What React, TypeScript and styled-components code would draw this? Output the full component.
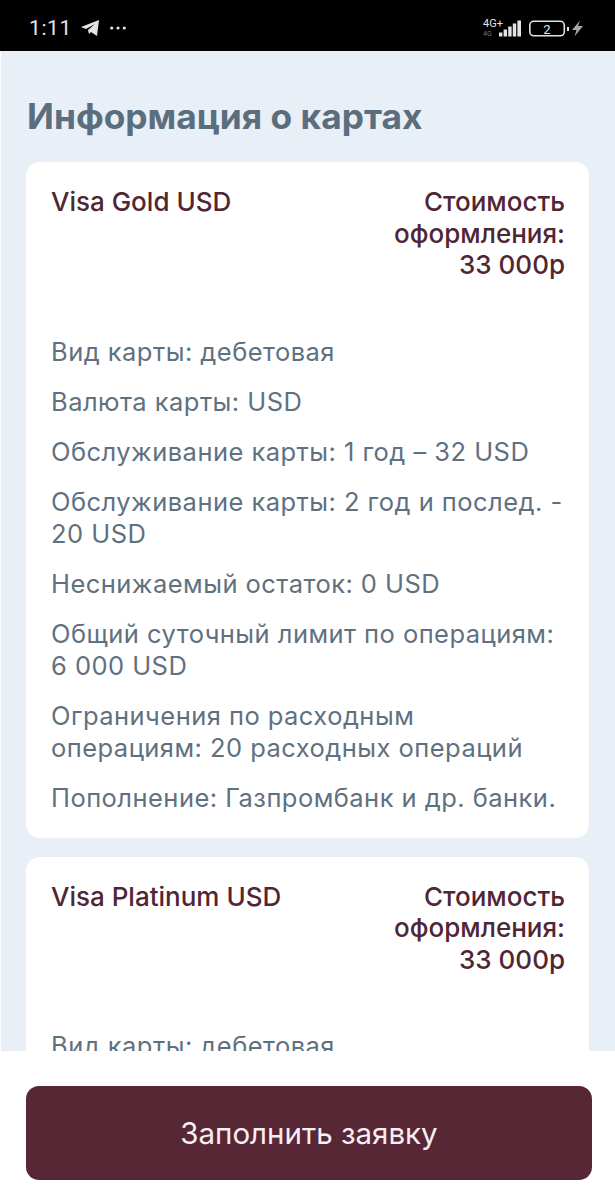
import styled, { createGlobalStyle } from "styled-components";

const GlobalStyle = createGlobalStyle`
  html, body {
    margin: 0;
    padding: 0;
    background: #fff;
  }
  * {
    box-sizing: border-box;
  }
`;
const Screen = styled.div`
  width: 615px;
  height: 1200px;
  display: flex;
  flex-direction: column;
  overflow: hidden;
  font-family: Inter, "Open Sans", sans-serif;
`;
const StatusBar = styled.div`
  height: 51px;
  flex: none;
  background: #000;
  color: #e4e4e4;
  display: flex;
  align-items: center;
  justify-content: space-between;
  padding: 4px 32px 0 29px;
`;
const StatusGroup = styled.div`
  display: flex;
  align-items: center;
  gap: 9px;
`;
const Clock = styled.span`
  font-family: Roboto, sans-serif;
  font-size: 21px;
  letter-spacing: 0.6px;
  margin-right: -1px;
`;
const Content = styled.main`
  flex: 1;
  min-height: 0;
  overflow: hidden;
  background: #e9eff6;
  padding: 44px 26px 0;
  margin-left: 1px;
`;
const Title = styled.h1`
  margin: 0 0 24px;
  height: 43px;
  color: #5b6e7e;
  font-size: 35.3px;
  line-height: 43px;
  font-weight: 700;
`;
const Card = styled.section`
  width: 563px;
  margin-left: -1px;
  margin-bottom: 19px;
  padding: 24px 24px 6px 25px;
  background: #fff;
  border-radius: 14px;
`;
const CardHead = styled.div`
  display: flex;
  justify-content: space-between;
  align-items: flex-start;
  margin-bottom: 55px;
  color: #502633;
  font-size: 26px;
  line-height: 31.5px;
  font-weight: 500;
`;
const CardName = styled.div``;
const CardPrice = styled.div`
  width: 200px;
  text-align: right;
`;
const Line = styled.p`
  margin: 0 0 18px;
  color: #5f7180;
  font-size: 25.5px;
  line-height: 32px;
  font-weight: 400;
  letter-spacing: 0.46px;
`;
const Footer = styled.footer`
  flex: none;
  height: 149px;
  background: #fff;
  padding: 35px 23px 20px 26px;
`;
const SubmitButton = styled.button`
  display: block;
  width: 100%;
  height: 94px;
  border: none;
  border-radius: 13px;
  background: #572736;
  color: #f7eff1;
  font: inherit;
  font-size: 29.5px;
`;

const goldLines = [
  "Вид карты: дебетовая",
  "Валюта карты: USD",
  "Обслуживание карты: 1 год – 32 USD",
  "Обслуживание карты: 2 год и послед. - 20 USD",
  "Неснижаемый остаток: 0 USD",
  "Общий суточный лимит по операциям: 6\u00a0000 USD",
  "Ограничения по расходным операциям: 20 расходных операций",
  "Пополнение: Газпромбанк и др. банки.",
];

const cards = [
  { name: "Visa Gold USD", lines: goldLines },
  { name: "Visa Platinum USD", lines: goldLines.slice(0, 2) },
];

function App() {
  return (
    <Screen>
      <GlobalStyle />
      <StatusBar>
        <StatusGroup>
          <Clock>1:11</Clock>
          <svg width="20" height="18" viewBox="0 0 20 18">
            <path d="M1 8 19 1 17 17 11 13 9 15 8 11 15 5 6 10Z" fill="#e4e4e4" />
          </svg>
          <svg width="18" height="6" viewBox="0 0 20 6">
            <circle cx="3" cy="3" r="1.8" fill="#e4e4e4" />
            <circle cx="10" cy="3" r="1.8" fill="#e4e4e4" />
            <circle cx="17" cy="3" r="1.8" fill="#e4e4e4" />
          </svg>
        </StatusGroup>
        <svg width="100" height="24" viewBox="0 0 100 24">
          <text x="0" y="10.5" fill="#e4e4e4" fontSize="11" fontFamily="Roboto, sans-serif">4G+</text>
          <text x="0" y="19.5" fill="#777" fontSize="7" fontFamily="Roboto, sans-serif">4G</text>
          <rect x="16" y="16.5" width="3.4" height="4" fill="#e4e4e4" />
          <rect x="20.6" y="13.5" width="3.4" height="7" fill="#e4e4e4" />
          <rect x="25.2" y="10.5" width="3.4" height="10" fill="#e4e4e4" />
          <rect x="29.8" y="7.5" width="3.4" height="13" fill="#e4e4e4" />
          <rect x="34.4" y="4.5" width="3.6" height="16" fill="#e4e4e4" />
          <rect x="46.8" y="5.3" width="34.5" height="14.5" rx="4" fill="none" stroke="#e4e4e4" strokeWidth="1.6" />
          <text x="64" y="17.5" fill="#e4e4e4" fontSize="13" textAnchor="middle" fontFamily="Roboto, sans-serif">2</text>
          <rect x="84" y="11" width="2" height="4" fill="#e4e4e4" />
          <path d="M97 4.5 89 14 93.5 14 91.5 20.5 100 10 95 10Z" fill="#a8a8a8" />
        </svg>
      </StatusBar>
      <Content>
        <Title>Информация о картах</Title>
        {cards.map((card) => (
          <Card key={card.name}>
            <CardHead>
              <CardName>{card.name}</CardName>
              <CardPrice>Стоимость оформления: 33&nbsp;000р</CardPrice>
            </CardHead>
            {card.lines.map((line) => (
              <Line key={line}>{line}</Line>
            ))}
          </Card>
        ))}
      </Content>
      <Footer>
        <SubmitButton>Заполнить заявку</SubmitButton>
      </Footer>
    </Screen>
  );
}

export default App;
